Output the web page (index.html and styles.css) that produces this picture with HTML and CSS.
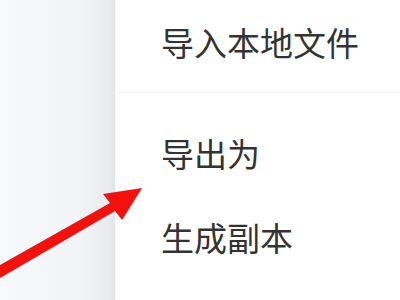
FILE: index.html
```html
<!DOCTYPE html>
<html lang="zh-CN">
<head>
<meta charset="UTF-8">
<meta name="viewport" content="width=device-width, initial-scale=1.0">
<title>文件菜单</title>
<link rel="stylesheet" href="styles.css">
</head>
<body>

<div id="screen">
    <div class="backdrop"></div>

    <div class="menu">
        <div class="menu-group first">
            <div class="menu-item">导入本地文件</div>
        </div>
        <div class="menu-group">
            <div class="menu-item">导出为</div>
            <div class="menu-item">生成副本</div>
        </div>
    </div>

    <svg class="arrow" width="400" height="300" viewBox="0 0 400 300">
        <polygon points="0,265 110,203 103,194 142,188 122,220 115,211 0,278" fill="#f3110e"/>
    </svg>
</div>

</body>
</html>
```

FILE: styles.css
```css
body {
    margin: 0;
    padding: 0;
    font-family: "Noto Sans CJK SC", "Noto Sans", sans-serif;
    background-color: #ffffff;
}
#screen {
    position: relative;
    display: flex;
    width: 400px;
    height: 300px;
    overflow: hidden;
}
.backdrop {
    width: 115px;
    flex-shrink: 0;
    background: linear-gradient(to right, #f8f9fb 0%, #f2f3f6 70%, #eaebee 95%, #e2e3e6 100%);
}
.menu {
    flex: 1;
    background-color: #ffffff;
    display: flex;
    flex-direction: column;
}
.menu-group {
    display: flex;
    flex-direction: column;
    gap: 51px;
    padding-top: 44px;
}
.menu-group.first {
    padding: 26px 0 33px;
    border-bottom: 1px solid #f1f1f3;
    margin-left: 2px;
}
.menu-item {
    padding-left: 46px;
    font-size: 33px;
    line-height: 33px;
    color: #333333;
}
.menu-group.first .menu-item {
    padding-left: 44px;
}
.arrow {
    position: absolute;
    left: 0;
    top: 0;
}
```
